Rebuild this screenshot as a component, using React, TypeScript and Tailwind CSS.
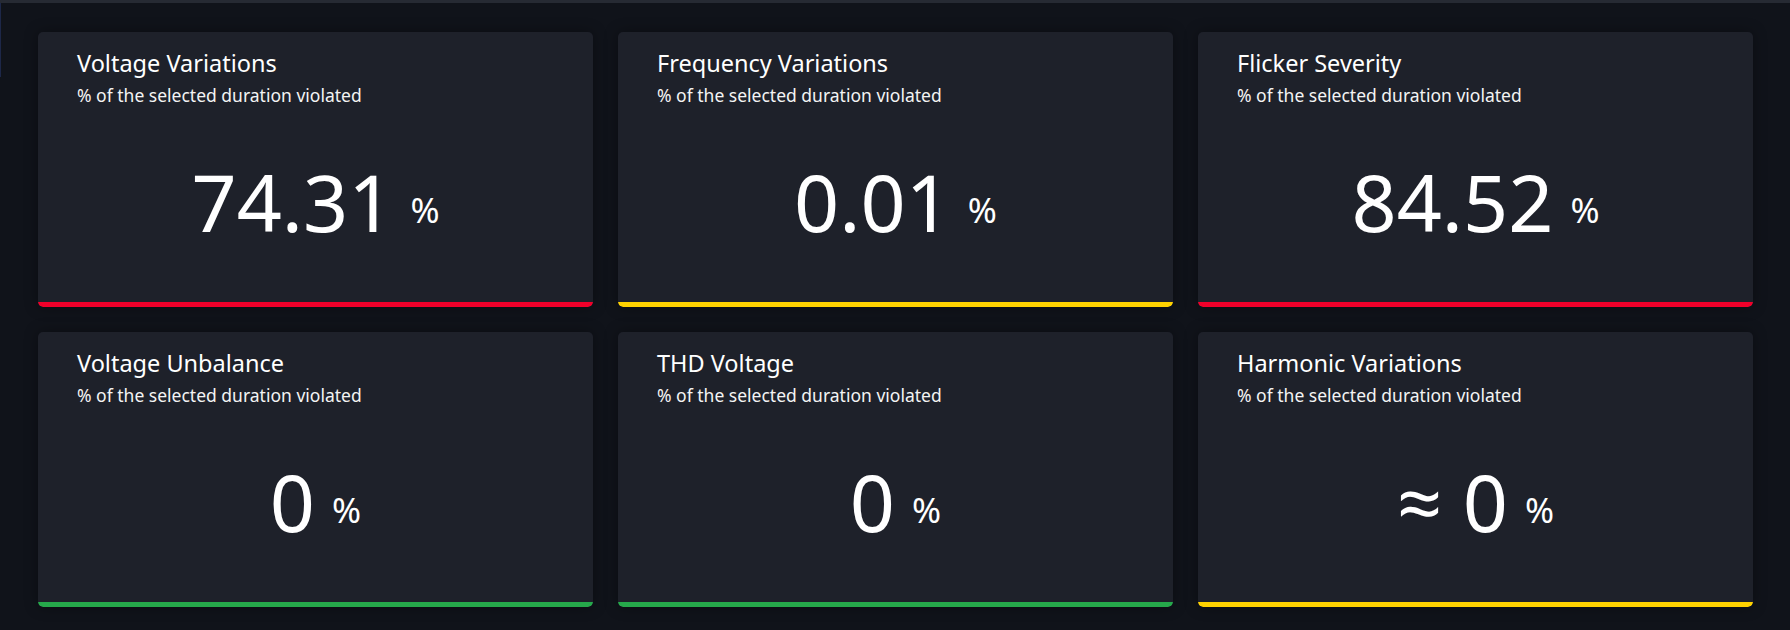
import React from "react";

type Card = {
  title: string;
  value: string;
  bar: string;
};

const cards: Card[] = [
  { title: "Voltage Variations", value: "74.31", bar: "bg-[#f0002a]" },
  { title: "Frequency Variations", value: "0.01", bar: "bg-[#ffd200]" },
  { title: "Flicker Severity", value: "84.52", bar: "bg-[#f0002a]" },
  { title: "Voltage Unbalance", value: "0", bar: "bg-[#26a94b]" },
  { title: "THD Voltage", value: "0", bar: "bg-[#26a94b]" },
  { title: "Harmonic Variations", value: "≈ 0", bar: "bg-[#ffd200]" },
];

function KpiCard({ c }: { c: Card }) {
  return (
    <div className="flex h-[275px] flex-col overflow-hidden rounded-[5px] bg-[#1e212a] shadow-[0_0_14px_rgba(0,0,0,0.35)]">
      <div className="flex flex-1 flex-col">
        <div className="pl-[39px] pt-[17px]">
          <div className="text-[23.5px] leading-[28px] text-white">{c.title}</div>
          <div className="mt-[7px] text-[17.5px] leading-[22px] text-[#f4f4f4]">
            % of the selected duration violated
          </div>
        </div>
        <div className="flex flex-1 items-center justify-center pb-[5px]">
          <span className="whitespace-pre text-[79px] leading-[79px] text-white">{c.value}</span>
          <span className="ml-[17px] mt-[15px] text-[35px] leading-[35px] text-white">%</span>
        </div>
      </div>
      <div className={`h-[5px] w-full rounded-b-[5px] ${c.bar}`} />
    </div>
  );
}

export default function App() {
  return (
    <div
      className="flex h-[630px] w-full flex-col overflow-hidden bg-[#10131a]"
      style={{ fontFamily: '"Noto Sans", "Open Sans", sans-serif' }}
    >
      <div className="h-[3px] w-full shrink-0 bg-[#262a33]" />
      <div className="flex flex-1 flex-row">
        <div className="h-[74px] w-px shrink-0 self-start bg-[#1d2748]" />
        <div className="grid flex-1 grid-cols-3 content-start gap-[25px] pl-[37px] pr-[37px] pt-[29px]">
          {cards.map((c) => (
            <KpiCard key={c.title} c={c} />
          ))}
        </div>
      </div>
    </div>
  );
}
